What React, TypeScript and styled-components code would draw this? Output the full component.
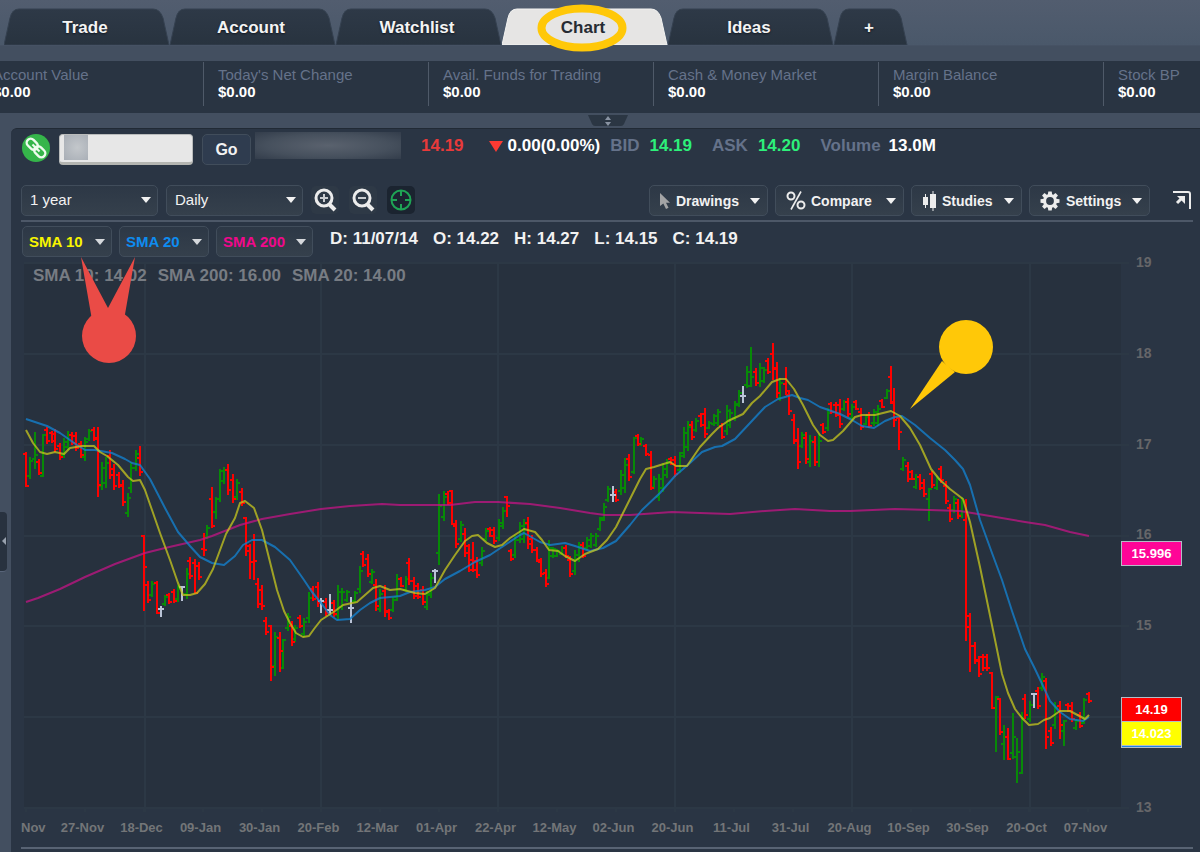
import React from "react";
import styled, { createGlobalStyle, css } from "styled-components";

const colors = {
  frame: "#434f60",
  panel: "#2a3544",
  plot: "#27313e",
  grid: "#2c3845",
  muted: "#65728a",
  line: "#4d5868",
  up: "#078a07",
  down: "#fd0100",
  flat: "#b9c3d6",
  bid: "#2df07a",
  loss: "#e83a3a",
};

const Global = createGlobalStyle`
  *, *::before, *::after { box-sizing: border-box; }
  body {
    margin: 0;
    background: ${colors.frame};
    font-family: "Liberation Sans", Arial, Helvetica, sans-serif;
    color: #f2f2f2;
  }
  button, input, select { font-family: inherit; margin: 0; }
`;

const Page = styled.div`
  position: relative;
  display: flex;
  flex-direction: column;
  min-height: 100vh;
  overflow: hidden;
`;

/* ---------- Tabs ---------- */

const TabBar = styled.nav`
  display: flex;
  height: 46px;
  padding: 8px 0 0 4px;
  background: linear-gradient(#525d6f, #4a586a);
  border-bottom: 1px solid #465264;
`;

const Tab = styled.button<{ $active?: boolean; $small?: boolean }>`
  position: relative;
  flex: none;
  width: ${(p) => (p.$small ? 74 : 166)}px;
  height: 37px;
  padding: 3px 4px 0 0;
  border: 0;
  background: none;
  font-size: 17px;
  line-height: 20px;
  font-weight: 700;
  color: ${(p) => (p.$active ? "#262b33" : "#f4f4f4")};
  text-shadow: ${(p) => (p.$active ? "none" : "0 1px 2px #10161f")};
`;

const TabShape = styled.svg`
  position: absolute;
  inset: 0;
  width: 100%;
  height: 100%;
`;

const TabText = styled.span`
  position: relative;
`;

const Ring = styled.svg`
  position: absolute;
  left: 35px;
  top: -4px;
  width: 90px;
  height: 48px;
`;

/* ---------- Account summary ---------- */

const Summary = styled.dl`
  display: flex;
  margin: 15px 0 0;
  height: 52px;
  padding-top: 1px;
  background: #293442;
  overflow: hidden;
`;

const SummaryTrack = styled.div`
  display: flex;
  flex: 1 0 auto;
  margin-left: -22px;
`;

const SummaryItem = styled.div`
  flex: 1 0 225px;
  height: 44px;
  padding: 4px 0 0 14px;
  border-left: 1px solid #4f5a69;
`;

const SummaryLabel = styled.dt`
  font-size: 15px;
  line-height: 17px;
  color: ${colors.muted};
  white-space: nowrap;
`;

const SummaryValue = styled.dd`
  margin: 0;
  font-size: 15px;
  line-height: 17px;
  font-weight: 700;
  color: #fff;
`;

const Splitter = styled.div`
  display: flex;
  justify-content: center;
  height: 15px;
  padding: 2px 0 0 16px;
`;

const SplitGrip = styled.svg`
  width: 40px;
  height: 12px;
`;

/* ---------- Workspace ---------- */

const Workspace = styled.div`
  display: flex;
  flex: 1;
`;

const Gutter = styled.aside`
  display: flex;
  flex-direction: column;
  justify-content: center;
  width: 11px;
  padding-top: 104px;
`;

const GutterHandle = styled.button`
  display: block;
  width: 7px;
  height: 60px;
  padding: 0;
  border: 0;
  border-bottom: 1px solid #59657a;
  border-radius: 0 4px 4px 0;
  background: #28323f;
`;

const Panel = styled.main`
  flex: 1;
  min-width: 0;
  padding: 3px 0 3px 10px;
  border-top: 1px solid #212a35;
  border-radius: 6px 0 0 0;
  background: ${colors.panel};
`;

const QuoteRow = styled.div`
  display: flex;
  align-items: flex-start;
  height: 53px;
`;

const LinkButton = styled.button`
  flex: none;
  width: 30px;
  height: 32px;
  margin-right: 8px;
  padding: 1px 0;
  border: 0;
  background: none;
`;

const SymbolBox = styled.div`
  position: relative;
  flex: none;
  width: 134px;
  margin: 2px 9px 0 0;
`;

const SymbolInput = styled.input`
  display: block;
  width: 100%;
  height: 31px;
  border: 1px solid #b9bbbb;
  border-bottom: 3px solid #b4b5b1;
  border-radius: 4px;
  background: #e7e7e7;
  font-size: 16px;
`;

const SymbolBlur = styled.span`
  position: absolute;
  left: 5px;
  top: 1px;
  width: 24px;
  height: 25px;
  background: radial-gradient(circle at 55% 50%, #c3c7cb, #a7adb5);
`;

const raised = css`
  border: 1px solid #414d5b;
  border-radius: 5px;
  background: linear-gradient(#2d3846, #35404c);
  color: #f2f2f2;
`;

const GoButton = styled.button`
  ${raised}
  flex: none;
  width: 49px;
  height: 31px;
  margin: 2px 4px 0 0;
  padding: 0;
  background: #2f3c4f;
  font-size: 16px;
  font-weight: 700;
`;

const NameBlur = styled.div`
  flex: none;
  width: 146px;
  height: 27px;
  background: radial-gradient(ellipse at 50% 50%, #5a626e, #46505d 60%, #333d4b);
`;

const QuoteText = styled.div`
  display: flex;
  align-items: center;
  height: 28px;
  font-size: 17px;
  line-height: 20px;
  font-weight: 700;
  white-space: nowrap;
`;

const Figure = styled.span<{ $tone?: "loss" | "bid" | "label"; $gap: number }>`
  margin-left: ${(p) => p.$gap}px;
  color: ${(p) =>
    p.$tone === "loss" ? colors.loss : p.$tone === "bid" ? colors.bid : p.$tone === "label" ? colors.muted : "#fff"};
`;

const DownMark = styled.svg`
  width: 14px;
  height: 11px;
  margin: 0 5px 0 25px;
`;

const ToolRow = styled.div`
  display: flex;
  align-items: flex-start;
  height: 37px;
  margin-right: 7px;
  border-bottom: 2px solid ${colors.line};
`;

const SelectBox = styled.label`
  position: relative;
  flex: none;
  width: 137px;
  margin-right: 8px;
`;

const Select = styled.select`
  ${raised}
  appearance: none;
  display: block;
  width: 100%;
  height: 31px;
  padding: 0 24px 2px 8px;
  font-size: 15px;
`;

const SelectCaret = styled.svg`
  position: absolute;
  right: 7px;
  top: 12px;
  width: 10px;
  height: 6px;
  pointer-events: none;
`;

const IconButton = styled.button<{ $on?: boolean }>`
  flex: none;
  width: 28px;
  height: 28px;
  margin: 1px 10px 0 0;
  padding: 0;
  border: 0;
  border-radius: 5px;
  background: ${(p) => (p.$on ? "#1b2430" : "#2e3946")};
`;

const Spacer = styled.div`
  flex: 1;
`;

const MenuButton = styled.button<{ $width: number }>`
  ${raised}
  display: flex;
  flex: none;
  align-items: center;
  width: ${(p) => p.$width}px;
  height: 31px;
  margin-right: 7px;
  padding: 0 7px 0 8px;
  font-size: 14px;
  font-weight: 700;
  gap: 4px;
`;

const MenuLabel = styled.span`
  flex: 1;
  text-align: left;
  white-space: nowrap;
`;

const Caret = styled.svg`
  flex: none;
  width: 10px;
  height: 6px;
`;

const PopOut = styled.button`
  flex: none;
  width: 20px;
  height: 20px;
  margin: 5px 1px 0 15px;
  padding: 0;
  border: 0;
  background: none;
`;

const StudyRow = styled.div`
  display: flex;
  align-items: flex-start;
  height: 36px;
  padding: 4px 0 0 1px;
`;

const StudyChip = styled.button<{ $color: string; $width: number }>`
  ${raised}
  display: flex;
  flex: none;
  align-items: center;
  justify-content: space-between;
  width: ${(p) => p.$width}px;
  height: 31px;
  margin-right: 7px;
  padding: 0 6px;
  font-size: 15px;
  font-weight: 700;
  color: ${(p) => p.$color};
  white-space: nowrap;
`;

const Readout = styled.div`
  display: flex;
  gap: 15px;
  margin-left: 10px;
  padding-top: 3px;
  font-size: 17px;
  line-height: 20px;
  font-weight: 700;
  white-space: nowrap;
`;

/* ---------- Chart ---------- */

const Chart = styled.section`
  position: relative;
  display: flex;
  height: 562px;
`;

const Plot = styled.svg`
  display: block;
  flex: 1;
  min-width: 0;
  height: 562px;
`;

const Legend = styled.div`
  position: absolute;
  left: 12px;
  top: 8px;
  display: flex;
  gap: 11px;
  font-size: 17px;
  line-height: 20px;
  font-weight: 700;
  color: #777c83;
  white-space: nowrap;
`;

const PriceAxis = styled.div`
  position: relative;
  display: flex;
  flex-direction: column;
  justify-content: space-between;
  width: 70px;
  height: 561px;
  margin-top: -4px;
  padding-left: 6px;
  font-size: 14px;
  font-weight: 700;
  color: #666669;
`;

const PriceTick = styled.span`
  height: 16px;
  line-height: 16px;
`;

const Badge = styled.span<{ $top: number; $color: string }>`
  position: absolute;
  left: -9px;
  top: ${(p) => p.$top}px;
  width: 61px;
  height: 25px;
  border: 1px solid #b4bcc6;
  background: ${(p) => p.$color};
  color: #fff;
  font-size: 13px;
  line-height: 23px;
  font-weight: 700;
  text-align: center;
`;

const DateAxis = styled.div`
  display: flex;
  margin-right: 85px;
  font-size: 13px;
  line-height: 16px;
  font-weight: 700;
  color: #737578;
`;

const DateTick = styled.span<{ $first?: boolean }>`
  flex: ${(p) => (p.$first ? "0 0 32px" : "1 1 0")};
  text-align: ${(p) => (p.$first ? "left" : "center")};
  white-space: nowrap;
`;

const BottomRule = styled.hr`
  height: 2px;
  margin: 11px 7px 0 0;
  border: 0;
  background: #586373;
`;

const Callout = styled.svg<{ $left: number; $top: number }>`
  position: absolute;
  left: ${(p) => p.$left}px;
  top: ${(p) => p.$top}px;
`;

/* ---------- Data ---------- */

type Kind = "u" | "d" | "f";
/* x, high, low, kind, and where known the open and close levels */
type Bar = [number, number, number, Kind, number?, number?];

const bars: Bar[] = [
  [26, 452, 487, "d", 454, 486], [30, 457, 479, "u"], [35, 432, 469, "u", 459, 455], [39, 459, 475, "d"], [43, 434, 477, "u", 476, 435],
  [47, 427, 444, "d"], [52, 431, 443, "d"], [55, 429, 452, "d"], [60, 443, 460, "d"], [64, 438, 458, "u"],
  [68, 431, 450, "u"], [72, 432, 445, "d"], [76, 432, 451, "d"], [81, 441, 458, "d"], [85, 437, 461, "u"],
  [89, 429, 441, "u"], [94, 427, 441, "d"], [98, 427, 497, "d", 438, 485], [102, 462, 490, "u"], [106, 457, 488, "u"],
  [110, 450, 479, "d"], [114, 464, 490, "d"], [119, 472, 488, "d"], [123, 480, 506, "d"], [128, 493, 517, "u"],
  [131, 462, 493, "u"], [136, 450, 471, "u"], [140, 446, 476, "d", 458, 472], [144, 535, 611, "d", 536, 567], [148, 581, 603, "d"],
  [152, 581, 597, "u"], [157, 581, 614, "d", 583, 613], [161, 606, 617, "f", 609, 609], [165, 595, 606, "u"], [169, 593, 604, "d"],
  [174, 589, 603, "d"], [178, 585, 602, "u"], [182, 586, 601, "f", 587, 587], [187, 568, 599, "u"], [190, 557, 579, "d"],
  [195, 559, 594, "d", 563, 593], [199, 562, 580, "d"], [204, 533, 556, "d", 549, 550], [207, 525, 539, "u"], [212, 487, 528, "d", 499, 526],
  [216, 497, 519, "u", 512, 499], [220, 469, 502, "u", 499, 471], [224, 467, 484, "u"], [228, 464, 495, "d"], [233, 474, 503, "d"],
  [237, 479, 500, "u"], [242, 488, 506, "d"], [246, 517, 556, "d", 518, 551], [250, 544, 579, "d", 546, 562], [254, 534, 580, "d", 562, 561],
  [258, 578, 608, "d"], [262, 585, 610, "d"], [266, 617, 635, "d"], [271, 625, 681, "d", 626, 667], [275, 632, 676, "u", 666, 637],
  [280, 632, 672, "d", 638, 651], [283, 639, 669, "u", 668, 640], [288, 613, 631, "u"], [292, 621, 646, "d"], [295, 625, 642, "u"],
  [300, 615, 628, "d"], [304, 618, 637, "u"], [309, 592, 623, "u"], [313, 586, 601, "d"], [318, 582, 607, "d"],
  [321, 598, 613, "f", 601, 601], [326, 598, 616, "d"], [330, 594, 615, "f", 610, 610], [334, 600, 617, "d"], [338, 585, 620, "u"],
  [342, 588, 610, "u"], [347, 590, 602, "u"], [351, 597, 623, "f", 608, 608], [355, 591, 603, "u"], [360, 566, 593, "u"],
  [363, 551, 567, "d"], [368, 554, 577, "d"], [372, 569, 584, "u"], [376, 579, 611, "d"], [380, 589, 612, "u"],
  [385, 585, 617, "d"], [389, 609, 620, "d"], [393, 597, 612, "u"], [397, 574, 601, "u"], [401, 577, 587, "d"],
  [406, 576, 592, "u"], [409, 558, 585, "d"], [414, 577, 599, "d"], [418, 583, 599, "d"], [423, 586, 605, "d"],
  [427, 591, 610, "u"], [431, 573, 598, "u"], [435, 569, 583, "f", 571, 571], [439, 494, 565, "u", 553, 506], [444, 491, 521, "u"],
  [448, 491, 505, "d"], [452, 490, 525, "d", 491, 524], [456, 520, 548, "d"], [461, 521, 542, "u"], [465, 528, 557, "d"],
  [469, 544, 572, "d", 546, 570], [473, 542, 572, "d", 560, 570], [477, 557, 578, "d"], [482, 547, 566, "u"], [486, 528, 541, "u"],
  [490, 527, 537, "d"], [494, 527, 544, "d"], [499, 519, 541, "u"], [503, 507, 529, "u"], [507, 496, 517, "d", 497, 506],
  [511, 549, 561, "d"], [515, 535, 558, "u"], [520, 522, 543, "u"], [524, 519, 543, "u"], [528, 517, 549, "d"],
  [532, 535, 553, "d"], [537, 547, 562, "d"], [541, 558, 577, "d"], [546, 569, 587, "d"], [549, 540, 579, "u", 578, 548],
  [553, 547, 558, "u"], [557, 549, 557, "u"], [562, 546, 555, "u"], [566, 545, 558, "d"], [570, 556, 577, "d"],
  [575, 550, 575, "u"], [579, 542, 562, "u"], [583, 542, 558, "d"], [587, 537, 550, "u"], [591, 533, 548, "u"],
  [596, 533, 547, "u"], [600, 517, 531, "u"], [604, 503, 521, "u"], [608, 486, 502, "u"], [613, 486, 502, "f", 495, 495],
  [616, 489, 502, "d"], [621, 470, 495, "u"], [625, 458, 493, "u"], [629, 454, 481, "d"], [634, 437, 474, "u", 472, 438],
  [638, 434, 446, "d"], [641, 437, 446, "u"], [646, 444, 456, "d"], [651, 451, 490, "d", 455, 488], [654, 476, 489, "u"],
  [659, 474, 501, "u"], [663, 463, 492, "u"], [667, 459, 478, "u"], [671, 457, 465, "d"], [675, 456, 477, "d"],
  [680, 452, 473, "u"], [684, 427, 458, "u"], [688, 421, 451, "u"], [692, 421, 440, "d"], [696, 418, 432, "u"],
  [701, 413, 427, "d"], [705, 408, 438, "d"], [709, 421, 429, "u"], [714, 414, 426, "u"], [718, 409, 426, "u"],
  [722, 423, 439, "d"], [727, 405, 435, "u"], [730, 409, 428, "u"], [735, 401, 421, "u"], [739, 390, 407, "u"],
  [743, 386, 403, "f", 396, 396], [747, 366, 388, "u", 385, 372], [751, 347, 387, "u", 386, 377], [756, 368, 386, "d"], [760, 363, 387, "u"],
  [764, 367, 383, "u"], [768, 358, 374, "d"], [773, 343, 380, "d", 354, 368], [777, 362, 398, "d"], [780, 378, 401, "u"],
  [786, 367, 395, "d", 384, 391], [789, 390, 415, "d"], [794, 414, 444, "d"], [798, 428, 469, "d", 441, 462], [802, 432, 448, "u"],
  [806, 432, 464, "d"], [810, 435, 467, "u"], [815, 436, 466, "d"], [819, 434, 467, "u"], [823, 423, 434, "d"],
  [828, 408, 431, "u"], [831, 402, 414, "d"], [836, 402, 417, "d"], [840, 399, 428, "d"], [844, 400, 411, "u"],
  [848, 398, 417, "d"], [852, 404, 420, "u"], [856, 400, 410, "d"], [861, 408, 430, "d"], [866, 415, 425, "u"],
  [869, 412, 428, "d"], [874, 409, 426, "u"], [878, 405, 426, "u"], [882, 399, 408, "d"], [887, 389, 399, "u"],
  [891, 366, 404, "d", 377, 402], [894, 388, 427, "d", 403, 420], [899, 417, 450, "d", 418, 432], [903, 457, 471, "u"], [908, 462, 482, "d"],
  [912, 470, 480, "d"], [916, 474, 489, "u"], [920, 474, 490, "d"], [924, 479, 497, "d"], [929, 488, 521, "u", 499, 489],
  [932, 471, 488, "d"], [937, 476, 490, "u"], [941, 466, 483, "d"], [946, 481, 504, "d"], [950, 504, 522, "d"],
  [954, 496, 513, "u"], [958, 499, 519, "d"], [962, 497, 518, "u"], [966, 499, 641, "d", 520, 616], [970, 613, 672, "d", 627, 646],
  [975, 642, 664, "d"], [979, 656, 677, "d"], [983, 654, 671, "d"], [987, 654, 671, "d"], [992, 672, 709, "d", 673, 708],
  [996, 696, 752, "u", 708, 697], [1000, 698, 735, "d", 699, 732], [1004, 725, 760, "u", 744, 737], [1008, 728, 760, "d", 737, 759], [1013, 713, 759, "u", 753, 737],
  [1017, 738, 783, "u", 757, 752], [1022, 712, 774, "u", 773, 718], [1025, 694, 719, "d"], [1030, 701, 722, "u"], [1034, 693, 708, "f", 694, 694],
  [1038, 687, 709, "d"], [1042, 673, 691, "u"], [1046, 678, 749, "d", 681, 737], [1051, 727, 746, "d"], [1055, 702, 729, "u"],
  [1060, 701, 739, "d", 706, 725], [1064, 721, 746, "u", 731, 721], [1068, 703, 712, "d"], [1072, 702, 722, "d"], [1076, 719, 730, "u"],
  [1080, 712, 728, "d"], [1084, 698, 724, "u", 723, 700], [1089, 692, 703, "d"],
];

const sma200 =
  "26,602 38,598 60,589 85,577 115,564 145,553 165,548 200,540 212,536 240,525 262,519 290,514 321,509 350,506 382,504 400,505 435,505 450,505 475,502 498,502 530,504 560,508 590,513 605,515 630,515 672,512 700,513 730,514 765,511 795,509 830,511 850,511 895,509 930,510 960,511 990,516 1025,522 1045,525 1070,532 1089,536";
const sma20 =
  "26,419 35,422 47,426 60,433 77,445 85,450 95,450 112,453 125,459 132,463 140,465 150,479 165,508 178,532 190,546 200,557 212,563 224,565 235,556 243,545 252,540 262,540 275,547 290,560 304,580 312,592 321,603 330,615 337,620 350,619 360,610 370,603 380,598 400,596 410,592 425,590 435,587 445,579 460,571 475,562 490,555 505,545 520,535 524,533 540,542 550,545 565,543 575,546 590,551 603,548 616,541 630,525 642,510 660,493 675,476 690,463 702,452 715,447 722,446 735,439 750,423 765,407 778,399 792,395 800,398 808,400 820,407 840,414 852,420 862,426 874,428 885,421 895,417 902,416 915,425 930,438 945,450 955,460 963,469 970,485 980,520 992,553 1002,580 1012,611 1025,649 1035,669 1044,688 1050,701 1060,712 1070,719 1083,721 1089,717";
const sma10 =
  "26,430 33,443 40,452 47,454 55,452 64,454 70,448 82,446 94,446 100,452 107,456 118,465 128,477 133,481 140,480 145,490 152,510 160,533 170,560 178,583 183,595 190,595 197,593 205,584 213,569 226,534 235,518 240,503 245,501 254,508 262,530 270,562 277,590 284,611 290,623 296,633 303,637 309,636 314,629 321,620 335,611 343,605 357,602 365,595 373,588 380,586 390,590 400,589 415,593 425,594 435,588 445,570 455,555 465,541 472,536 478,535 487,543 495,547 502,545 510,538 524,529 535,532 542,540 549,550 558,551 565,556 575,561 585,554 598,549 607,540 616,527 629,501 640,479 646,469 654,467 670,462 676,466 687,466 700,447 712,434 718,428 728,421 743,414 752,403 760,396 772,382 780,379 786,379 794,389 803,405 813,425 820,435 828,441 833,440 843,431 855,417 862,415 875,415 891,411 900,416 910,428 920,445 931,469 940,480 950,489 963,499 970,522 980,567 993,630 1002,674 1008,693 1015,709 1022,718 1029,725 1038,724 1044,720 1050,718 1060,711 1070,711 1085,719 1089,715";

const gridX = [145, 321, 498, 675, 852, 1030];
const gridY = [263, 354, 445, 536, 626, 717, 808];
const dates = [
  "Nov", "27-Nov", "18-Dec", "09-Jan", "30-Jan", "20-Feb", "12-Mar", "01-Apr", "22-Apr", "12-May",
  "02-Jun", "20-Jun", "11-Jul", "31-Jul", "20-Aug", "10-Sep", "30-Sep", "20-Oct", "07-Nov",
];
/* The 14 level is taken by the last-price badges. */
const prices = ["19", "18", "17", "16", "15", "", "13"];

const tabs = ["Trade", "Account", "Watchlist", "Chart", "Ideas"];

const summary = [
  ["Account Value", "$0.00"],
  ["Today's Net Change", "$0.00"],
  ["Avail. Funds for Trading", "$0.00"],
  ["Cash & Money Market", "$0.00"],
  ["Margin Balance", "$0.00"],
  ["Stock BP", "$0.00"],
];

/* ---------- Parts ---------- */

function barPath(kind: Kind) {
  return bars
    .filter((b) => b[3] === kind)
    .map(([x, hi, lo, k, o, c]) => {
      const upper = Math.round(hi + (lo - hi) * 0.2);
      const lower = Math.round(lo - (lo - hi) * 0.15);
      const open = o ?? (k === "d" ? upper : lower);
      const close = c ?? (k === "d" ? lower : upper);
      return `M${x} ${hi}V${lo}M${x - 3} ${open}H${x + 1}M${x - 1} ${close}H${x + 3}`;
    })
    .join("");
}

function TabBack({ width, active }: { width: number; active?: boolean }) {
  const w = width;
  return (
    <TabShape viewBox={`0 0 ${w} 37`} aria-hidden="true">
      <defs>
        <linearGradient id="tabDark" x1="0" y1="0" x2="0" y2="1">
          <stop offset="0" stopColor="#2e3947" />
          <stop offset="1" stopColor="#28333f" />
        </linearGradient>
      </defs>
      <path
        d={`M0 37L6 10Q8 1 15 1H${w - 17}Q${w - 10} 1 ${w - 7} 10L${w - 1} 37Z`}
        fill={active ? "#e6e5e4" : "url(#tabDark)"}
        stroke={active ? "#f4f4f2" : "#354150"}
        strokeWidth="1"
      />
    </TabShape>
  );
}

const Tri = ({ color = "#f2f2f2" }: { color?: string }) => (
  <Caret viewBox="0 0 10 6" aria-hidden="true">
    <path d="M0 0H10L5 6Z" fill={color} />
  </Caret>
);

function Dropdown({ label, options }: { label: string; options: string[] }) {
  return (
    <SelectBox>
      <Select aria-label={label}>
        {options.map((o) => (
          <option key={o}>{o}</option>
        ))}
      </Select>
      <SelectCaret viewBox="0 0 10 6" aria-hidden="true">
        <path d="M0 0H10L5 6Z" fill="#f2f2f2" />
      </SelectCaret>
    </SelectBox>
  );
}

const Magnifier = ({ plus }: { plus?: boolean }) => (
  <svg width="28" height="28" viewBox="0 0 28 28" fill="none" stroke="#ececec" aria-hidden="true">
    <circle cx="13" cy="12" r="8" strokeWidth="3" />
    <path d="M18 18L24 24" strokeWidth="4" />
    <path d={plus ? "M9 12H17M13 8V16" : "M9 12H17"} stroke="#c9ccd0" strokeWidth="2" />
  </svg>
);

const Crosshair = () => (
  <svg width="28" height="28" viewBox="0 0 28 28" fill="none" stroke="#1fa455" aria-hidden="true">
    <circle cx="14" cy="14" r="9.500" strokeWidth="2" />
    <path d="M14 4V10M14 18V24M4 14H10M18 14H24" strokeWidth="2" />
  </svg>
);

const ChainIcon = () => (
  <svg width="30" height="30" viewBox="0 0 30 30" fill="none" aria-hidden="true">
    <circle cx="15" cy="15" r="14" fill="#35b54a" />
    <g transform="rotate(45 15 15)" stroke="#eefbee" strokeWidth="2.4">
      <rect x="3.5" y="11" width="12.5" height="8" rx="4" />
      <rect x="14" y="11" width="12.5" height="8" rx="4" />
      <path d="M10 15H20" strokeWidth="2" />
    </g>
  </svg>
);

const CursorIcon = () => (
  <svg width="14" height="18" viewBox="0 0 14 18" aria-hidden="true">
    <path d="M2 1V14L5.300 11.500L8 17L10.500 15.800L8 10.700H12Z" fill="#a3a4a5" />
  </svg>
);

const PercentIcon = () => (
  <svg width="23" height="22" viewBox="0 0 23 22" fill="none" stroke="#ececec" aria-hidden="true">
    <circle cx="7" cy="6" r="3.500" strokeWidth="2" />
    <circle cx="17" cy="15" r="3.500" strokeWidth="2" />
    <path d="M17 1.500L7 19.500" strokeWidth="1.600" />
  </svg>
);

const CandlesIcon = () => (
  <svg width="18" height="20" viewBox="0 0 18 20" fill="#ececec" aria-hidden="true">
    <path d="M3 6H8V14H3ZM5 3H6V17H5ZM10 3H16V17H10ZM12.500 0H13.500V20H12.500Z" />
  </svg>
);

const GearIcon = () => (
  <svg width="24" height="22" viewBox="-12 -11 24 22" aria-hidden="true">
    <circle r="5.400" fill="none" stroke="#ececec" strokeWidth="3" />
    {[0, 45, 90, 135, 180, 225, 270, 315].map((a) => (
      <path key={a} transform={`rotate(${a})`} d="M-2.200 -6L-1.700 -9.500H1.700L2.200 -6Z" fill="#ececec" />
    ))}
  </svg>
);

export default function App() {
  return (
    <Page>
      <Global />
      <TabBar>
        {tabs.map((t) => (
          <Tab key={t} $active={t === "Chart"}>
            <TabBack width={166} active={t === "Chart"} />
            {t === "Chart" && (
              <Ring viewBox="0 0 90 48" aria-hidden="true">
                <ellipse cx="45" cy="24" rx="40.500" ry="19.500" fill="none" stroke="#ffc808" strokeWidth="8" />
              </Ring>
            )}
            <TabText>{t}</TabText>
          </Tab>
        ))}
        <Tab $small aria-label="Add tab">
          <TabBack width={74} />
          <TabText>+</TabText>
        </Tab>
      </TabBar>

      <Summary>
        <SummaryTrack>
          {summary.map(([label, value]) => (
            <SummaryItem key={label}>
              <SummaryLabel>{label}</SummaryLabel>
              <SummaryValue>{value}</SummaryValue>
            </SummaryItem>
          ))}
        </SummaryTrack>
      </Summary>
      <Splitter>
        <SplitGrip viewBox="0 0 40 12" aria-hidden="true">
          <path d="M0 0H40L36 9Q35 11 33 11H7Q5 11 4 9Z" fill="#2b3643" />
          <path d="M17 5L20 1L23 5ZM17 7H23L20 11Z" fill="#8a94a3" />
        </SplitGrip>
      </Splitter>

      <Workspace>
        <Gutter>
          <GutterHandle aria-label="Expand side panel">
            <svg width="6" height="10" viewBox="0 0 6 10" aria-hidden="true">
              <path d="M5 1V9L1 5Z" fill="#98a1ae" />
            </svg>
          </GutterHandle>
        </Gutter>
        <Panel>
          <QuoteRow>
            <LinkButton aria-label="Link symbol">
              <ChainIcon />
            </LinkButton>
            <SymbolBox>
              <SymbolInput aria-label="Symbol" />
              <SymbolBlur />
            </SymbolBox>
            <GoButton>Go</GoButton>
            <NameBlur />
            <QuoteText>
              <Figure $tone="loss" $gap={20}>14.19</Figure>
              <DownMark viewBox="0 0 14 11" aria-hidden="true">
                <path d="M0 0H14L7 11Z" fill="#fb3a33" />
              </DownMark>
              <Figure $gap={0}>0.00(0.00%)</Figure>
              <Figure $tone="label" $gap={10}>BID</Figure>
              <Figure $tone="bid" $gap={10}>14.19</Figure>
              <Figure $tone="label" $gap={20}>ASK</Figure>
              <Figure $tone="bid" $gap={10}>14.20</Figure>
              <Figure $tone="label" $gap={20}>Volume</Figure>
              <Figure $gap={8}>13.0M</Figure>
            </QuoteText>
          </QuoteRow>

          <ToolRow>
            <Dropdown label="Range" options={["1 year", "6 months", "1 month"]} />
            <Dropdown label="Interval" options={["Daily", "Weekly", "Monthly"]} />
            <IconButton aria-label="Zoom in">
              <Magnifier plus />
            </IconButton>
            <IconButton aria-label="Zoom out">
              <Magnifier />
            </IconButton>
            <IconButton $on aria-label="Crosshair">
              <Crosshair />
            </IconButton>
            <Spacer />
            <MenuButton $width={119}>
              <CursorIcon />
              <MenuLabel>Drawings</MenuLabel>
              <Tri />
            </MenuButton>
            <MenuButton $width={129}>
              <PercentIcon />
              <MenuLabel>Compare</MenuLabel>
              <Tri />
            </MenuButton>
            <MenuButton $width={111}>
              <CandlesIcon />
              <MenuLabel>Studies</MenuLabel>
              <Tri />
            </MenuButton>
            <MenuButton $width={121}>
              <GearIcon />
              <MenuLabel>Settings</MenuLabel>
              <Tri />
            </MenuButton>
            <PopOut aria-label="Open in new window">
              <svg width="20" height="20" viewBox="0 0 20 20" fill="none" stroke="#ececec" aria-hidden="true">
                <path d="M1 2H16Q18 2 18 4V19" strokeWidth="2" />
                <path d="M5 13L10 8" strokeWidth="3" />
                <path d="M5 6H13V14Z" fill="#ececec" stroke="none" />
              </svg>
            </PopOut>
          </ToolRow>

          <StudyRow>
            <StudyChip $color="#f8f500" $width={90}>
              SMA 10 <Tri color="#d5d8dc" />
            </StudyChip>
            <StudyChip $color="#0e8cf0" $width={90}>
              SMA 20 <Tri color="#d5d8dc" />
            </StudyChip>
            <StudyChip $color="#f0088c" $width={97}>
              SMA 200 <Tri color="#d5d8dc" />
            </StudyChip>
            <Readout>
              <span>D: 11/07/14</span>
              <span>O: 14.22</span>
              <span>H: 14.27</span>
              <span>L: 14.15</span>
              <span>C: 14.19</span>
            </Readout>
          </StudyRow>

          <Chart>
            <Plot viewBox="21 258 1109 562" preserveAspectRatio="none" role="img" aria-label="Price chart with moving averages">
              <rect x="24" y="264" width="1097" height="544" fill={colors.plot} />
              <g stroke={colors.grid} strokeWidth="2">
                {gridY.map((y) => (
                  <path key={y} d={`M24 ${y}H1129`} />
                ))}
                {gridX.map((x) => (
                  <path key={x} d={`M${x} 264V812`} />
                ))}
                {dates.map((d, i) => (
                  <path key={i} d={`M${26 + i * 59} 808V812`} />
                ))}
              </g>
              <g fill="none" strokeWidth="2">
                <path d={barPath("u")} stroke={colors.up} />
                <path d={barPath("d")} stroke={colors.down} />
                <path d={barPath("f")} stroke={colors.flat} />
              </g>
              <g fill="none" strokeWidth="2" strokeLinejoin="round">
                <polyline points={sma200} stroke="#c41486" opacity="0.75" />
                <polyline points={sma20} stroke="#1480cc" opacity="0.8" />
                <polyline points={sma10} stroke="#c8c81e" opacity="0.75" />
              </g>
            </Plot>
            <Legend>
              <span>SMA 10: 14.02</span>
              <span>SMA 200: 16.00</span>
              <span>SMA 20: 14.00</span>
            </Legend>
            <PriceAxis>
              {prices.map((p, i) => (
                <PriceTick key={i}>{p}</PriceTick>
              ))}
              <Badge $top={287} $color="#ff0597">15.996</Badge>
              <Badge $top={469} $color="#1e86e0" />
              <Badge $top={443} $color="#ff0000">14.19</Badge>
              <Badge $top={467} $color="#ffff00">14.023</Badge>
            </PriceAxis>
          </Chart>
          <DateAxis>
            {dates.map((d, i) => (
              <DateTick key={d} $first={i === 0}>
                {d}
              </DateTick>
            ))}
          </DateAxis>
          <BottomRule />
        </Panel>
      </Workspace>

      <Callout $left={81} $top={257} width="56" height="106" viewBox="81 257 56 106" aria-hidden="true">
        <circle cx="109" cy="336" r="27" fill="#ea4b46" />
        <path d="M81 257L108 308L135 257L124 320H92Z" fill="#ea4b46" />
      </Callout>
      <Callout $left={910} $top={320} width="84" height="90" viewBox="910 320 84 90" aria-hidden="true">
        <circle cx="966" cy="347" r="27" fill="#ffc808" />
        <path d="M910 409L942 361L955 372Z" fill="#ffc808" />
      </Callout>
    </Page>
  );
}
